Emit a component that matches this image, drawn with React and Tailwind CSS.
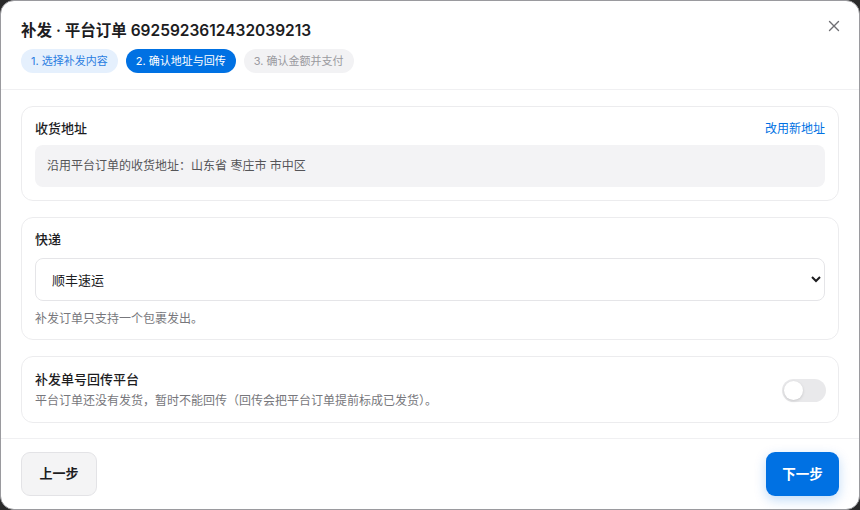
import React from "react";

export default function App() {
  const font = { fontFamily: 'Inter, "Noto Sans CJK SC", "Noto Sans", sans-serif' };
  return (
    <div className="w-[860px] h-[510px] bg-[#2a2a2a]" style={font}>
      <div className="w-full h-full bg-white rounded-[14px] border border-[#9a9a9e] flex flex-col overflow-hidden text-[#1d1d1f]">
        {/* header */}
        <div className="relative px-[20px] pt-[18px] pb-[16px] border-b border-[#f0f0f2]">
          <div className="text-[15.5px] leading-[24px] font-semibold">补发 · 平台订单 6925923612432039213</div>
          <div className="mt-[6px] flex gap-[8px]">
            <span className="h-[24px] px-[10px] rounded-full bg-[#e5f0fd] text-[#2a7de1] text-[11px] leading-[24px]">1. 选择补发内容</span>
            <span className="h-[24px] px-[10px] rounded-full bg-[#0071e3] text-white text-[11px] leading-[24px]">2. 确认地址与回传</span>
            <span className="h-[24px] px-[10px] rounded-full bg-[#f2f2f4] text-[#9a9a9f] text-[11px] leading-[24px]">3. 确认金额并支付</span>
          </div>
          <button className="absolute right-[18px] top-[18px] w-[14px] h-[14px] text-[#6e6e73]">
            <svg viewBox="0 0 14 14" width="14" height="14" fill="none" stroke="currentColor" strokeWidth="1.4" strokeLinecap="round">
              <path d="M2.5 2.5 L11.5 11.5 M11.5 2.5 L2.5 11.5" />
            </svg>
          </button>
        </div>

        {/* body */}
        <div className="flex-1 px-[20px] pt-[16px] flex flex-col gap-[16px]">
          <div className="rounded-[12px] border border-[#ececee] p-[13px]">
            <div className="flex items-center justify-between h-[18px]">
              <span className="text-[13px] font-medium">收货地址</span>
              <span className="text-[12px] text-[#0071e3]">改用新地址</span>
            </div>
            <div className="mt-[7px] h-[42px] rounded-[8px] bg-[#f3f3f5] px-[12px] flex items-center text-[12px] text-[#555558]">
              沿用平台订单的收货地址：山东省 枣庄市 市中区
            </div>
          </div>

          <div className="rounded-[12px] border border-[#ececee] pt-[13px] px-[13px] pb-[12px]">
            <div className="h-[18px] flex items-center text-[13px] font-medium">快递</div>
            <select className="mt-[9px] w-full h-[43px] rounded-[8px] border border-[#e5e5e8] bg-white pl-[12px] pr-[8px] text-[13px] text-[#1d1d1f]" defaultValue="sf">
              <option value="sf">顺丰速运</option>
            </select>
            <div className="mt-[10px] h-[16px] flex items-center text-[12px] text-[#77777c]">补发订单只支持一个包裹发出。</div>
          </div>

          <div className="rounded-[12px] border border-[#ececee] pl-[13px] pr-[12px] pt-[14px] pb-[13px] flex items-center justify-between">
            <div>
              <div className="h-[18px] flex items-center text-[13px] font-medium">补发单号回传平台</div>
              <div className="mt-[4px] h-[16px] flex items-center text-[12px] text-[#77777c]">平台订单还没有发货，暂时不能回传（回传会把平台订单提前标成已发货）。</div>
            </div>
            <div className="w-[44px] h-[23px] rounded-full bg-[#e9e9eb] p-[2px] flex items-center">
              <div className="w-[19px] h-[19px] rounded-full bg-white shadow-[0_1px_3px_rgba(0,0,0,0.15)]" />
            </div>
          </div>
        </div>

        {/* footer */}
        <div className="h-[71px] border-t border-[#f0f0f2] px-[20px] flex items-center justify-between">
          <button className="w-[76px] h-[44px] rounded-[9px] bg-[#f4f4f5] border border-[#e3e3e6] text-[13px] font-semibold text-[#1d1d1f]">上一步</button>
          <button className="w-[73px] h-[44px] rounded-[9px] bg-[#0071e3] text-[13.5px] font-semibold text-white shadow-[0_4px_12px_rgba(0,113,227,0.25)]">下一步</button>
        </div>
      </div>
    </div>
  );
}
